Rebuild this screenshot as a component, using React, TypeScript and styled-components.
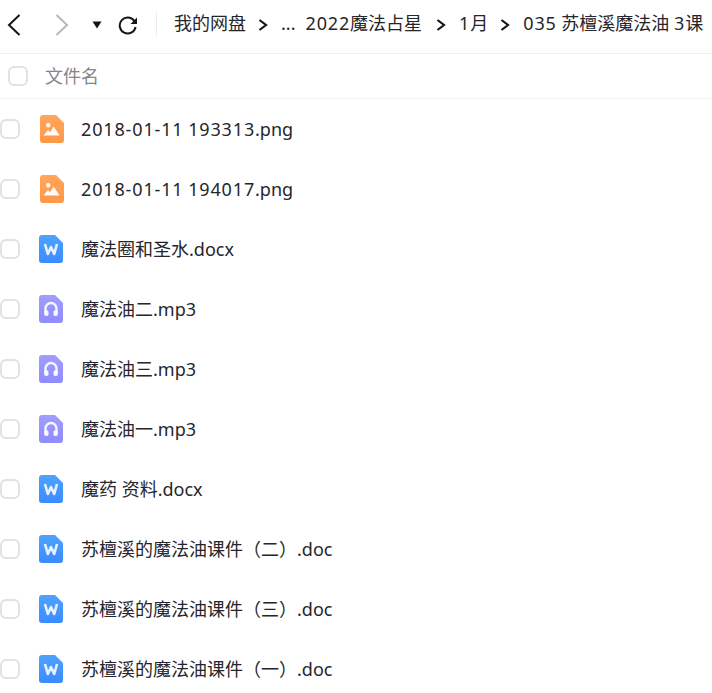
import { createGlobalStyle, styled } from 'styled-components';

const Global = createGlobalStyle`
  html, body {
    margin: 0;
    padding: 0;
    background: #fff;
    overflow: hidden;
  }
  body {
    font-family: "Noto Sans", "Noto Sans CJK SC", sans-serif;
  }
`;

const Page = styled.div`
  width: 712px;
  height: 693px;
  overflow: hidden;
`;

const Toolbar = styled.div`
  height: 54px;
  box-sizing: border-box;
  padding-bottom: 3px;
  display: flex;
  align-items: center;
  border-bottom: 1px solid #f0f0f1;
  white-space: nowrap;
  overflow: hidden;
`;

const NavIcon = styled.svg<{ $ml: number }>`
  flex: none;
  margin-left: ${p => p.$ml}px;
`;

const Divider = styled.div`
  flex: none;
  width: 1px;
  height: 26px;
  background: #ececee;
  margin: -3px 17px 0 18px;
`;

const Crumb = styled.span<{ $ml?: number }>`
  flex: none;
  font-size: 18px;
  color: #25262b;
  line-height: 24px;
  margin-top: -5px;
  margin-left: ${p => p.$ml ?? 0}px;
`;

const Sep = styled.svg<{ $ml: number; $mr: number }>`
  flex: none;
  margin: 0 ${p => p.$mr}px 0 ${p => p.$ml}px;
`;

const Digits = styled.span`
  letter-spacing: 0.85px;
`;

const HeadRow = styled.div`
  height: 44px;
  display: flex;
  align-items: center;
  padding-left: 8px;
  border-bottom: 1px solid #f3f3f4;
`;

const Check = styled.div`
  flex: none;
  box-sizing: border-box;
  width: 20px;
  height: 20px;
  border: 2px solid #e2e2e4;
  border-radius: 6px;
  background: #fff;
`;

const HeadLabel = styled.span`
  font-size: 18px;
  color: #84858d;
  margin-left: 17px;
  line-height: 24px;
`;

const List = styled.div`
  display: flex;
  flex-direction: column;
`;

const Row = styled.div`
  height: 60px;
  display: flex;
  align-items: center;
`;

const FileName = styled.span<{ $ml: number }>`
  font-size: 18px;
  line-height: 24px;
  color: #25262b;
  margin-left: ${p => p.$ml}px;
  white-space: nowrap;
`;

const IconSlot = styled.svg<{ $ml: number }>`
  flex: none;
  margin-left: ${p => p.$ml}px;
`;

type Kind = 'image' | 'word' | 'audio';

const BODY = 'M3 0h13L24 8v17a3 3 0 0 1-3 3H3a3 3 0 0 1-3-3V3a3 3 0 0 1 3-3z';

const FileIcon = ({ kind }: { kind: Kind }) => {
  const id = `grad-${kind}`;
  const [from, to] =
    kind === 'image' ? ['#ffa75c', '#ff9748'] : kind === 'word' ? ['#4da3ff', '#3a8bff'] : ['#a09dff', '#8f8cff'];
  return (
    <IconSlot $ml={kind === 'image' ? 20 : 19} width="24" height="28" viewBox="0 0 24 28">
      <defs>
        <linearGradient id={id} x1="0" y1="0" x2="0" y2="1">
          <stop offset="0" stopColor={from} />
          <stop offset="1" stopColor={to} />
        </linearGradient>
      </defs>
      <path d={BODY} fill={`url(#${id})`} />
      {kind === 'image' && (
        <>
          <circle cx="8.2" cy="10.2" r="2.2" fill="#fff" fillOpacity="0.95" />
          <path d="M3.5 20.5L8 15l2.2 2.2 3.4-5.6 6 8.9z" fill="#fff" fillOpacity="0.95" />
        </>
      )}
      {kind === 'word' && (
        <path
          d="M6 9l2.8 10 3.2-7 3.2 7L18 9"
          fill="none"
          stroke="#fff"
          strokeOpacity="0.88"
          strokeWidth="2.6"
          strokeLinejoin="round"
        />
      )}
      {kind === 'audio' && (
        <>
          <path
            d="M6.5 19v-5.5a5.5 5.5 0 0 1 11 0V19"
            fill="none"
            stroke="#fff"
            strokeOpacity="0.9"
            strokeWidth="2.4"
          />
          <rect x="5.3" y="15.5" width="4.2" height="5.5" rx="1.4" fill="#fff" fillOpacity="0.9" />
          <rect x="14.5" y="15.5" width="4.2" height="5.5" rx="1.4" fill="#fff" fillOpacity="0.9" />
        </>
      )}
    </IconSlot>
  );
};

const files: { name: string; kind: Kind }[] = [
  { name: '2018-01-11 193313.png', kind: 'image' },
  { name: '2018-01-11 194017.png', kind: 'image' },
  { name: '魔法圈和圣水.docx', kind: 'word' },
  { name: '魔法油二.mp3', kind: 'audio' },
  { name: '魔法油三.mp3', kind: 'audio' },
  { name: '魔法油一.mp3', kind: 'audio' },
  { name: '魔药 资料.docx', kind: 'word' },
  { name: '苏檀溪的魔法油课件（二）.doc', kind: 'word' },
  { name: '苏檀溪的魔法油课件（三）.doc', kind: 'word' },
  { name: '苏檀溪的魔法油课件（一）.doc', kind: 'word' },
];

// digits sit wider in the reference font than in Noto Sans
const spaced = (text: string) =>
  text.split(/([\d-]+)/).map((part, i) => (i % 2 ? <Digits key={i}>{part}</Digits> : part));

const Chevron = ({ ml, mr }: { ml: number; mr: number }) => (
  <Sep $ml={ml} $mr={mr} width="10" height="14" viewBox="0 0 10 14">
    <path d="M1.5 2l6.5 5-6.5 5" fill="none" stroke="#14151a" strokeWidth="2.2" />
  </Sep>
);

const App = () => (
  <Page>
    <Global />
    <Toolbar>
      <NavIcon $ml={7} width="14" height="22" viewBox="0 0 14 22">
        <path d="M12.5 1L2 11l10.5 10" fill="none" stroke="#14151a" strokeWidth="2" />
      </NavIcon>
      <NavIcon $ml={34} width="14" height="22" viewBox="0 0 14 22">
        <path d="M1.5 1L12 11 1.5 21" fill="none" stroke="#b9b9bd" strokeWidth="2" />
      </NavIcon>
      <NavIcon $ml={23} width="10" height="8" viewBox="0 0 10 8">
        <path d="M0.5 0.5h9L5 7.5z" fill="#14151a" />
      </NavIcon>
      <NavIcon $ml={16} width="20" height="20" viewBox="0 0 20 20">
        <path d="M16.5 6.2A8 8 0 1 0 17.6 12" fill="none" stroke="#14151a" strokeWidth="2" />
        <path d="M19 2.5v6.5h-6.5z" fill="#14151a" />
      </NavIcon>
      <Divider />
      <Crumb>我的网盘</Crumb>
      <Chevron ml={12} mr={13} />
      <Crumb>...</Crumb>
      <Crumb $ml={10}>{spaced('2022魔法占星')}</Crumb>
      <Chevron ml={14} mr={13} />
      <Crumb>{spaced('1月')}</Crumb>
      <Chevron ml={12} mr={13} />
      <Crumb>{spaced('035 苏檀溪魔法油 3课')}</Crumb>
    </Toolbar>
    <HeadRow>
      <Check />
      <HeadLabel>文件名</HeadLabel>
    </HeadRow>
    <List>
      {files.map(f => (
        <Row key={f.name}>
          <Check />
          <FileIcon kind={f.kind} />
          <FileName $ml={f.kind === 'image' ? 17 : 18}>{spaced(f.name)}</FileName>
        </Row>
      ))}
    </List>
  </Page>
);

export default App;
